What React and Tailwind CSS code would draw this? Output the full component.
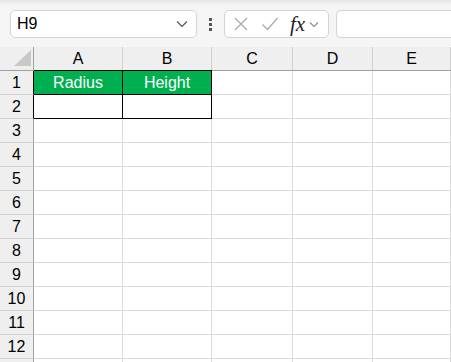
import React from "react";

const cols = [
  { name: "A", w: "w-[89px]" },
  { name: "B", w: "w-[89px]" },
  { name: "C", w: "w-[81px]" },
  { name: "D", w: "w-[80px]" },
  { name: "E", w: "flex-1" },
];

const rows = [1, 2, 3, 4, 5, 6, 7, 8, 9, 10, 11, 12, 13];

// cells inside the bordered range A1:B2
function cellClass(r, c) {
  const inRange = r <= 2 && c <= 1;
  let cls = "h-full border-r border-b flex items-center justify-center ";
  if (inRange) cls += "border-black ";
  else cls += "border-[#dadada] ";
  if (r === 1 && c <= 1) cls += "bg-[#00b050] text-white ";
  return cls;
}

export default function App() {
  return (
    <div
      className="w-[451px] h-[362px] overflow-hidden bg-white text-black"
      style={{ fontFamily: '"Liberation Sans", Arial, sans-serif' }}
    >
      {/* formula bar */}
      <div className="h-[47px] bg-[#f5f5f5] bg-gradient-to-b from-[#e6e6e6] to-[#f5f5f5] to-[12%] flex items-start pt-[10px] pl-[10px]">
        <div className="w-[187px] h-[28px] bg-white border border-[#d4d4d4] rounded-[5px] flex items-center pl-[6px] pr-[8px]">
          <span className="text-[16px] flex-1">H9</span>
          <svg width="12" height="8" viewBox="0 0 12 8">
            <path d="M1 1.5 L6 6.5 L11 1.5" fill="none" stroke="#555" strokeWidth="1.2" />
          </svg>
        </div>
        <div className="w-[27px] h-[28px] flex flex-col items-center justify-center gap-[2px]">
          <div className="w-[3px] h-[3px] bg-[#555]" />
          <div className="w-[3px] h-[3px] bg-[#555]" />
          <div className="w-[3px] h-[3px] bg-[#555]" />
        </div>
        <div className="w-[105px] h-[28px] bg-white border border-[#d4d4d4] rounded-[5px] flex items-center">
          <svg className="ml-[8px]" width="16" height="16" viewBox="0 0 16 16">
            <path d="M2 2 L14 14 M14 2 L2 14" stroke="#a8a8a8" strokeWidth="1.2" fill="none" />
          </svg>
          <svg className="ml-[12px]" width="18" height="16" viewBox="0 0 18 16">
            <path d="M1.5 8.5 L6.5 13.5 L16.5 2" stroke="#a8a8a8" strokeWidth="1.2" fill="none" />
          </svg>
          <span
            className="ml-[11px] text-[21px] italic text-[#222] leading-none"
            style={{ fontFamily: '"Liberation Serif", "Times New Roman", serif' }}
          >
            fx
          </span>
          <svg className="ml-[4px]" width="10" height="7" viewBox="0 0 10 7">
            <path d="M1 1.5 L5 5.5 L9 1.5" fill="none" stroke="#888" strokeWidth="1.1" />
          </svg>
        </div>
        <div className="ml-[7px] flex-1 h-[28px] bg-white border border-[#d4d4d4] border-r-0 rounded-l-[5px]" />
      </div>

      {/* column headers */}
      <div className="flex h-[24px] bg-[#efefef]">
        <div className="w-[34px] h-full border-r border-b border-[#a0a0a0] relative">
          <svg className="absolute right-[2px] bottom-[4px]" width="17" height="16" viewBox="0 0 17 16">
            <path d="M17 0 L17 16 L0 16 Z" fill="#c8c8c8" />
          </svg>
        </div>
        {cols.map((c, i) => (
          <div
            key={c.name}
            className={`${c.w} h-full border-b flex items-center justify-center text-[16px] ${
              i <= 1 ? "border-black" : "border-[#a0a0a0]"
            }`}
          >
            <div className="flex-1 text-center">{c.name}</div>
            <div className="w-px h-full bg-[#d0d0d0]" />
          </div>
        ))}
      </div>

      {/* rows */}
      {rows.map((r) => (
        <div key={r} className="flex h-[24px]">
          <div
            className={`w-[34px] h-full bg-[#efefef] border-r border-b flex items-center justify-center text-[16px] ${
              r <= 2 ? "border-r-black border-b-[#d0d0d0]" : "border-r-[#a0a0a0] border-b-[#d0d0d0]"
            }`}
          >
            {r < 13 ? r : ""}
          </div>
          {cols.map((c, i) => (
            <div key={c.name} className={`${c.w} ${cellClass(r, i)} text-[16px]`}>
              {r === 1 && i === 0 ? "Radius" : r === 1 && i === 1 ? "Height" : ""}
            </div>
          ))}
        </div>
      ))}
    </div>
  );
}
